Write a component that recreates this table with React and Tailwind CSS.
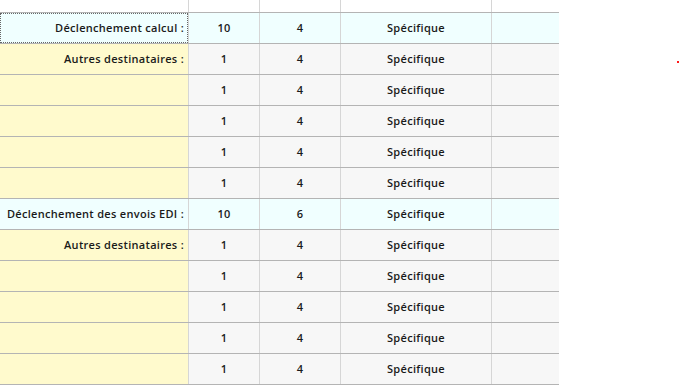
import React from 'react';

// Lignes du tableau de déclenchement
const rows = [
  { label: 'Déclenchement calcul :', a: '10', b: '4', c: 'Spécifique', hl: true, focus: true },
  { label: 'Autres destinataires :', a: '1', b: '4', c: 'Spécifique' },
  { label: '', a: '1', b: '4', c: 'Spécifique' },
  { label: '', a: '1', b: '4', c: 'Spécifique' },
  { label: '', a: '1', b: '4', c: 'Spécifique' },
  { label: '', a: '1', b: '4', c: 'Spécifique' },
  { label: 'Déclenchement des envois EDI :', a: '10', b: '6', c: 'Spécifique', hl: true },
  { label: 'Autres destinataires :', a: '1', b: '4', c: 'Spécifique' },
  { label: '', a: '1', b: '4', c: 'Spécifique' },
  { label: '', a: '1', b: '4', c: 'Spécifique' },
  { label: '', a: '1', b: '4', c: 'Spécifique' },
  { label: '', a: '1', b: '4', c: 'Spécifique' },
];

const font = { fontFamily: '"Open Sans", "DejaVu Sans", sans-serif' };

const App = () => {
  return (
    <div className="relative w-[681px] h-[386px] bg-white overflow-hidden text-[11px] font-semibold tracking-[0.3px] text-[#1a1a1a]" style={font}>
      <div className="w-[559px]">
        {/* Ligne d'en-tête vide */}
        <div className="flex h-[13px] border-b border-[#b4b4b4] bg-white">
          <div className="w-[189px] border-r border-[#d6d6d6]"></div>
          <div className="w-[71px] border-r border-[#d6d6d6]"></div>
          <div className="w-[81px] border-r border-[#d6d6d6]"></div>
          <div className="w-[151px] border-r border-[#d6d6d6]"></div>
          <div className="w-[67px]"></div>
        </div>

        {rows.map((r, i) => (
          <div
            key={i}
            className={`flex h-[31px] border-b border-[#b4b4b4] ${r.hl ? 'bg-[#f0ffff]' : 'bg-[#f7f7f7]'}`}
          >
            <div
              className={`relative w-[189px] border-r border-[#d6d6d6] flex items-center justify-end pr-[4px] pt-[1px] ${r.hl ? 'bg-[#f0ffff]' : 'bg-[#fffacd]'}`}
            >
              {r.focus && (
                <div className="absolute inset-0 border border-dotted border-[#666]"></div>
              )}
              <span>{r.label}</span>
            </div>
            <div className="w-[71px] border-r border-[#d6d6d6] flex items-center justify-center pt-[1px]">{r.a}</div>
            <div className="w-[81px] border-r border-[#d6d6d6] flex items-center justify-center pt-[1px]">{r.b}</div>
            <div className="w-[151px] border-r border-[#d6d6d6] flex items-center justify-center pt-[1px]">{r.c}</div>
            <div className="w-[67px]"></div>
          </div>
        ))}
      </div>

      {/* Petit point rouge */}
      <div className="absolute left-[677px] top-[61px] w-[2px] h-[2px] bg-[#ff1a1a]"></div>
    </div>
  );
};

export default App;
